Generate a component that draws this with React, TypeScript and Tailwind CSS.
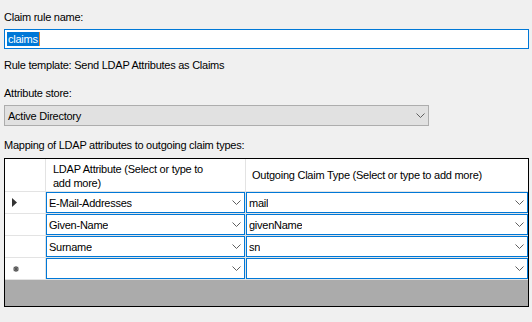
import React from 'react'

const rows = [
  { attr: 'E-Mail-Addresses', claim: 'mail', current: true },
  { attr: 'Given-Name', claim: 'givenName' },
  { attr: 'Surname', claim: 'sn' },
]

function Chevron() {
  return (
    <svg width="9" height="5" viewBox="0 0 9 5" className="shrink-0">
      <path d="M0.5 0.5 L4.5 4.5 L8.5 0.5" fill="none" stroke="#5f5f5f" strokeWidth="1" />
    </svg>
  )
}

function Combo({ value }: { value: string }) {
  return (
    <div className="flex items-center justify-between border border-[#0078d7] bg-white pl-[2px] pr-[3px]">
      <span className="truncate">{value}</span>
      <Chevron />
    </div>
  )
}

function RowHeader({ children }: { children?: React.ReactNode }) {
  return <div className="flex items-center bg-white pl-[7px]">{children}</div>
}

export default function App() {
  return (
    <div className="w-[532px] h-[322px] overflow-hidden bg-[#f0f0f0] px-[4px] pt-[9px] font-['Liberation_Sans',Arial,sans-serif] text-[11px] leading-4 tracking-[-0.25px] text-[#000]">
      <div>Claim rule name:</div>
      <div className="mt-[4px] flex h-[20px] w-[525px] items-center border border-[#0078d7] bg-white pl-[2px]">
        <span className="h-[14px] bg-[#0078d7] px-px leading-[14px] text-white">claims</span>
        <span className="h-[14px] w-px bg-[#e8862c]" />
      </div>

      <div className="mt-[8px]">Rule template: Send LDAP Attributes as Claims</div>

      <div className="mt-[12px]">Attribute store:</div>
      <div className="mt-[4px] flex h-[21px] w-[425px] items-center justify-between border border-[#adadad] bg-[#e1e1e1] pl-[3px] pr-[3px]">
        <span>Active Directory</span>
        <Chevron />
      </div>

      <div className="mt-[11px]">Mapping of LDAP attributes to outgoing claim types:</div>

      <div className="mt-[5px] h-[149px] w-[525px] border border-black bg-[#ababab]">
        <div className="grid grid-cols-[40px_199px_282px] grid-rows-[32px_21px_21px_21px_21px] gap-px bg-[#e3e3e3] pb-px leading-[14px]">
          <RowHeader />
          <div className="bg-white pl-[7px] pt-[3px]">
            LDAP Attribute (Select or type to
            <br />
            add more)
          </div>
          <div className="flex items-center bg-white pl-[6px]">Outgoing Claim Type (Select or type to add more)</div>

          {rows.map((r) => (
            <React.Fragment key={r.attr}>
              <RowHeader>
                {r.current && (
                  <svg width="5" height="9" viewBox="0 0 5 9">
                    <polygon points="0,0 5,4.5 0,9" fill="#333" />
                  </svg>
                )}
              </RowHeader>
              <Combo value={r.attr} />
              <Combo value={r.claim} />
            </React.Fragment>
          ))}

          <RowHeader>
            <svg width="6" height="6" viewBox="0 0 6 6" className="ml-[1px]">
              <path d="M3 0 V6 M0 3 H6 M0.8 0.8 L5.2 5.2 M5.2 0.8 L0.8 5.2" stroke="#555" strokeWidth="1.2" />
            </svg>
          </RowHeader>
          <Combo value="" />
          <Combo value="" />
        </div>
      </div>
    </div>
  )
}
